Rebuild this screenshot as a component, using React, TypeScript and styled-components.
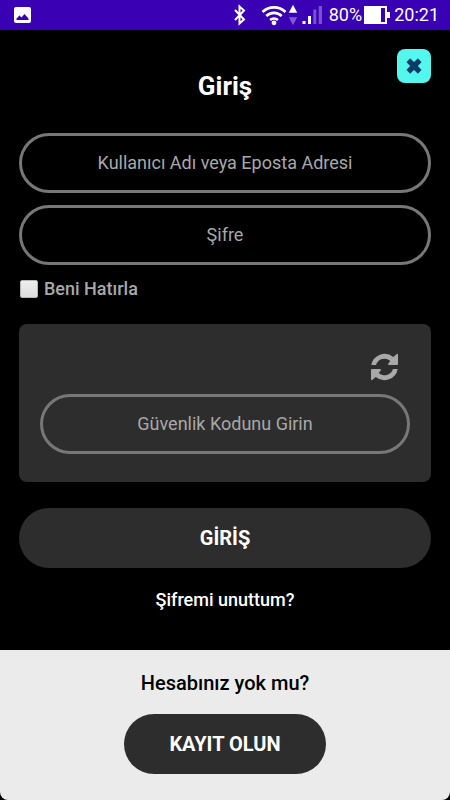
import React from "react";
import styled, { createGlobalStyle } from "styled-components";

const GlobalStyle = createGlobalStyle`
  *, *::before, *::after { box-sizing: border-box; }
  body { margin: 0; background: #000; }
  body, button, input { font-family: Roboto, "Noto Sans", sans-serif; }
`;

const Screen = styled.div`
  display: flex;
  flex-direction: column;
  min-height: 100vh;
  background: #000;
`;

const StatusBar = styled.header`
  display: flex;
  align-items: center;
  justify-content: space-between;
  height: 30px;
  padding: 0 11px 0 14px;
  background: #3a00b3;
  color: #fff;
  font-size: 18px;
  line-height: 30px;

  svg { display: block; }
`;

const StatusGroup = styled.div<{ $gap: number }>`
  display: flex;
  align-items: center;
  gap: ${(p) => p.$gap}px;
`;

const Login = styled.main`
  position: relative;
  flex: 1;
  padding: 40px 19px 32px;
`;

const CloseButton = styled.button`
  position: absolute;
  top: 19px;
  right: 19px;
  display: grid;
  place-items: center;
  width: 34px;
  height: 34px;
  padding: 0;
  border: 0;
  border-radius: 8px;
  background: #53f7ee;
  color: #0b3c68;
`;

const Title = styled.h1`
  margin: 0 0 31px;
  color: #fff;
  font-size: 26px;
  font-weight: 700;
  line-height: 32px;
  text-align: center;
`;

const Fields = styled.div`
  display: grid;
  gap: 12px;
`;

const Field = styled.input`
  display: block;
  width: 100%;
  height: 60px;
  padding: 0 24px 2px;
  border: 3px solid #777;
  border-radius: 30px;
  outline: 0;
  background: transparent;
  color: #fff;
  font-size: 18px;
  text-align: center;

  &::placeholder { color: #a8a8a8; opacity: 1; }
`;

const Remember = styled.label`
  display: flex;
  align-items: center;
  gap: 6px;
  margin: 12px 0 23px 1px;
  color: #a8a8a8;
  font-size: 18px;
  font-weight: 500;
  line-height: 24px;
`;

const Checkbox = styled.input`
  appearance: none;
  width: 18px;
  height: 18px;
  margin: 0;
  border: 1px solid #b5b5b5;
  border-radius: 2px;
  background: linear-gradient(#eee, #dcdcdc);

  &:checked { background: #53f7ee; }
`;

const CaptchaCard = styled.section`
  display: flex;
  flex-direction: column;
  padding: 29px 21px 28px;
  border-radius: 8px;
  background: #2d2d2d;
`;

const RefreshButton = styled.button`
  align-self: flex-end;
  margin: 0 12px 13px 0;
  padding: 0;
  border: 0;
  background: none;
  color: #a8a8a8;
  line-height: 0;
`;

const PillButton = styled.button<{ $wide?: boolean }>`
  display: block;
  width: ${(p) => (p.$wide ? "100%" : "auto")};
  height: 60px;
  padding: 0 45px;
  border: 0;
  border-radius: 30px;
  background: #2d2d2d;
  color: #fff;
  font-size: 20px;
  font-weight: 700;
`;

const Submit = styled(PillButton)`
  margin: 26px 0 20px;
`;

const ForgotLink = styled.a`
  display: block;
  width: fit-content;
  margin: 0 auto;
  color: #fff;
  font-size: 18px;
  font-weight: 500;
  line-height: 24px;
  text-decoration: none;
`;

const Register = styled.footer`
  display: flex;
  flex-direction: column;
  align-items: center;
  gap: 18px;
  padding: 20px 19px 26px;
  border-radius: 0 0 8px 8px;
  background: #ebebeb;
`;

const RegisterText = styled.p`
  margin: 0;
  color: #000;
  font-size: 20px;
  font-weight: 500;
  line-height: 26px;
`;

const PictureIcon = () => (
  <svg width="17" height="18" viewBox="0 0 17 18" aria-hidden="true">
    <rect y="1" width="17" height="16" rx="2" fill="#fff" />
    <path d="M2.5 14v-1.5L5.5 9.5l2 2 3-3.5 4 4.5V14z" fill="#3a00b3" />
  </svg>
);

const SignalIcons = () => (
  <svg width="90" height="24" viewBox="0 0 90 24" fill="none" aria-hidden="true">
    <path d="M3 7l9 9.5-4.5 4V3.5l4.5 4L3 17" stroke="#fff" strokeWidth="2" />
    <g stroke="#fff" strokeWidth="2.6">
      <path d="M30.500 9a16.500 16.500 0 0 1 23 0" />
      <path d="M34.300 13a11 11 0 0 1 15.400 0" />
      <path d="M38.100 17a6 6 0 0 1 7.800 0" />
    </g>
    <circle cx="42" cy="19.8" r="2.4" fill="#fff" />
    <path d="M61 1.8l4.2 8h-8.4z" fill="#fff" />
    <path d="M61 22.2l4.2-8h-8.4z" fill="#8058d0" />
    <path d="M70.5 18h3v3h-3zM76 13h3v8h-3z" fill="#fff" />
    <path d="M81.300 6.5h3V21h-3zM86.700 3H90v18h-3.300z" fill="#7950cd" />
  </svg>
);

const BatteryIcon = () => (
  <svg width="26" height="18" viewBox="0 0 26 18" aria-hidden="true">
    <path d="M0 0h23v6h3v6h-3v6H0z" fill="#fff" />
    <path d="M17 2h4v14h-4z" fill="#3a00b3" />
  </svg>
);

const CloseIcon = () => (
  <svg width="16" height="16" viewBox="0 0 13 13" aria-hidden="true">
    <path
      d="M3.400 1l3.100 3.100L9.600 1 12 3.400 8.900 6.500 12 9.600 9.600 12 6.500 8.900 3.400 12 1 9.600l3.100-3.100L1 3.400z"
      fill="currentColor"
      stroke="currentColor"
      strokeLinejoin="round"
    />
  </svg>
);

const refreshHalf =
  "M.3 12A13.500 13.500 0 0 1 22.300 4L25.800 1Q27 .4 27 2V11q0 1-1 1H18Q16.300 11.600 17.500 10.200L19.300 8A8.700 8.700 0 0 0 5 12z";

const RefreshIcon = () => (
  <svg width="27" height="28" viewBox="0 0 27 28" fill="currentColor" aria-hidden="true">
    <path d={refreshHalf} />
    <path d={refreshHalf} transform="rotate(180 13.5 14)" />
  </svg>
);

export default function App() {
  return (
    <Screen lang="tr">
      <GlobalStyle />
      <StatusBar>
        <PictureIcon />
        <StatusGroup $gap={4}>
          <StatusGroup $gap={7}>
            <SignalIcons />
            <StatusGroup $gap={2}>
              <span>80%</span>
              <BatteryIcon />
            </StatusGroup>
          </StatusGroup>
          <time>20:21</time>
        </StatusGroup>
      </StatusBar>

      <Login>
        <CloseButton type="button" aria-label="Kapat">
          <CloseIcon />
        </CloseButton>
        <Title>Giriş</Title>
        <form onSubmit={(e) => e.preventDefault()}>
          <Fields>
            <Field
              type="text"
              aria-label="Kullanıcı Adı veya Eposta Adresi"
              placeholder="Kullanıcı Adı veya Eposta Adresi"
            />
            <Field type="password" aria-label="Şifre" placeholder="Şifre" />
          </Fields>
          <Remember>
            <Checkbox type="checkbox" />
            Beni Hatırla
          </Remember>
          <CaptchaCard>
            <RefreshButton type="button" aria-label="Kodu yenile">
              <RefreshIcon />
            </RefreshButton>
            <Field
              type="text"
              aria-label="Güvenlik Kodunu Girin"
              placeholder="Güvenlik Kodunu Girin"
            />
          </CaptchaCard>
          <Submit type="submit" $wide>GİRİŞ</Submit>
        </form>
        <ForgotLink href="#sifre">Şifremi unuttum?</ForgotLink>
      </Login>

      <Register>
        <RegisterText>Hesabınız yok mu?</RegisterText>
        <PillButton type="button">KAYIT OLUN</PillButton>
      </Register>
    </Screen>
  );
}
